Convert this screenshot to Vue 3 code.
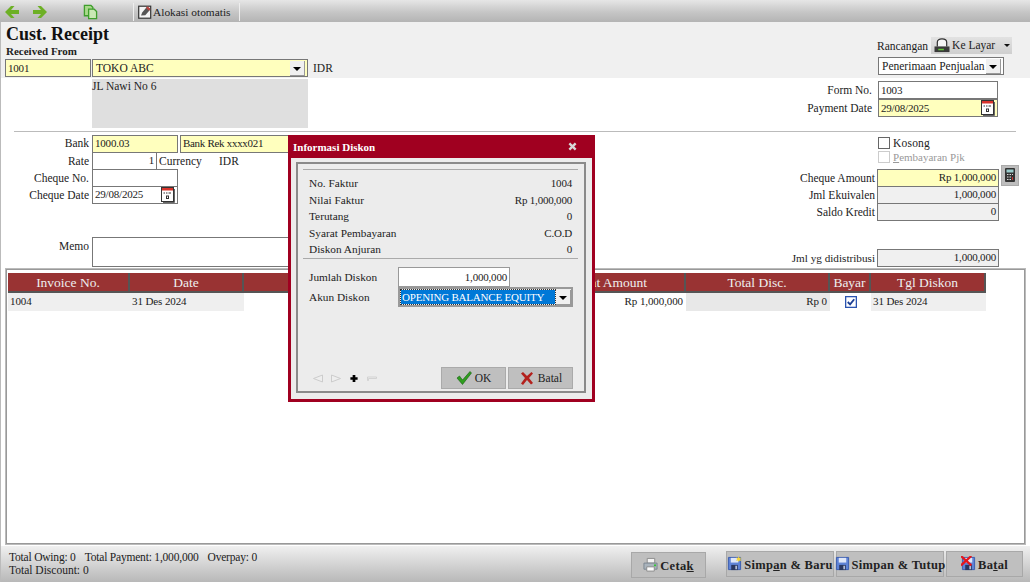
<script setup>
const infoRows = [
  ['No. Faktur', '1004'],
  ['Nilai Faktur', 'Rp 1,000,000'],
  ['Terutang', '0'],
  ['Syarat Pembayaran', 'C.O.D'],
  ['Diskon Anjuran', '0'],
]
const headers = ['Invoice No.', 'Date', '', 'Payment Amount', 'Total Disc.', 'Bayar', 'Tgl Diskon']
</script>

<template>
  <div class="app">
    <svg class="defs" width="0" height="0">
      <symbol id="cal" viewBox="0 0 16 16">
        <path d="M14.500 2v13.500H3" fill="none" stroke="#666" />
        <rect x="1.500" y=".5" width="12" height="14" fill="#fff" stroke="#333" />
        <rect x="2" y="1" width="11" height="2.500" fill="#d9342b" />
        <path d="M3.500 6h1.500M6 6h1.500M8.500 6H11" stroke="#333" />
        <path d="M6 8.500h3v3.500H6z" fill="#333" />
        <path d="M7 9.500h1v1.500H7z" fill="#fff" />
      </symbol>
      <symbol id="floppy" viewBox="0 0 16 16">
        <path d="M1.500 1.500h13v13h-13z" fill="#5f83d6" stroke="#3a5cae" />
        <path d="M4 2h8v5H4z" fill="#dfe7f8" />
        <path d="M4.500 9.500h7V15h-7z" fill="#2a3760" />
        <path d="M9 10.500h1.500V14H9z" fill="#cfd8ea" />
      </symbol>
    </svg>

    <div class="toolbar">
      <div class="tool-group">
        <svg class="t-arrow" viewBox="0 0 14 12"><path d="M0 6l6-6h3.500L6 4h8v4H6l3.500 4H6z" fill="#6db025" /></svg>
        <svg class="t-arrow t-next" viewBox="0 0 14 12"><path d="M14 6L8 0H4.500L8 4H0v4h8l-3.500 4H8z" fill="#6db025" /></svg>
        <svg class="t-copy" viewBox="0 0 16 16"><path d="M1.500 1h7l2 2v9h-9z" fill="#a9d98b" stroke="#3f9e2c" stroke-width="1.400" /><path d="M6 5h6l2.500 2.500V15H6z" fill="#c9e8b4" stroke="#3f9e2c" stroke-width="1.400" /></svg>
      </div>
      <div class="tool-sep"></div>
      <div class="tool-btn">
        <svg class="t-edit" viewBox="0 0 14 14"><rect x=".7" y="1.200" width="12" height="12" fill="#f4f4f4" stroke="#333" stroke-width="1.200" /><path d="M3 10.500l1.200-3 5-6 3.300 2.700-5.200 6z" fill="#555" /><path d="M9.500 1.300l3 2.700-1.500 1.800-3-2.700z" fill="#b8433f" /></svg>
        <span>Alokasi otomatis</span>
      </div>
      <div class="tool-sep"></div>
    </div>

    <header class="head">
      <div class="head-left">
        <h1>Cust. Receipt</h1>
        <div class="recv">Received From</div>
        <div class="recv-row">
          <div class="field yellow f-code num">1001</div>
          <div class="field yellow f-cust"><span>TOKO ABC</span><i class="drop"></i></div>
          <span class="idr">IDR</span>
        </div>
      </div>
      <div class="head-right">
        <div class="ranc">
          <span>Rancangan</span>
          <div class="layar">
            <svg class="printer" viewBox="0 0 18 16"><path d="M4 9V4.500C4 2 6 1 9 1s5 1 5 3.500V9" fill="#f5f5f5" stroke="#333" stroke-width="1.300" /><path d="M1 9h16v6H1z" fill="#3a3a3a" /><path d="M5 11.500h6v1.600H5z" fill="#62c83a" /></svg>
            <span>Ke Layar</span>
            <i class="caret"></i>
          </div>
        </div>
        <div class="field plain f-rsel"><span>Penerimaan Penjualan</span><i class="drop"></i></div>
      </div>
    </header>

    <main class="body">
      <section class="top">
        <div class="address">JL Nawi No 6</div>
        <div class="form-no">
          <label>Form No.</label>
          <div class="field plain num">1003</div>
          <label>Payment Date</label>
          <div class="field yellow date num"><span>29/08/2025</span><svg class="cal"><use href="#cal" /></svg></div>
        </div>
      </section>
      <hr class="divider" />

      <section class="mid">
        <div class="mid-left">
          <div class="row">
            <label class="first-label">Bank</label>
            <div class="field yellow w86 num">1000.03</div>
            <div class="field yellow bankname">Bank Rek xxxx021</div>
          </div>
          <div class="row">
            <label>Rate</label>
            <div class="field plain w64 right num">1</div>
            <span class="cur">Currency</span>
            <span class="cur-val">IDR</span>
          </div>
          <div class="row">
            <label>Cheque No.</label>
            <div class="field plain w86"></div>
          </div>
          <div class="row">
            <label>Cheque Date</label>
            <div class="field plain w86 date num"><span>29/08/2025</span><svg class="cal"><use href="#cal" /></svg></div>
          </div>
          <div class="row memo-row">
            <label>Memo</label>
            <div class="field plain memo"></div>
          </div>
        </div>

        <div class="mid-right">
          <div class="check-row"><i class="box"></i><span>Kosong</span></div>
          <div class="check-row off"><i class="box"></i><span><u>P</u>embayaran Pjk</span></div>
          <div class="amt-row amt-first">
            <label>Cheque Amount</label>
            <div class="field yellow amt num">Rp 1,000,000</div>
            <div class="calc">
              <svg viewBox="0 0 12 16"><rect x="1" y="1" width="10" height="14" rx="1" fill="#333" /><rect x="2.500" y="2.500" width="7" height="3" fill="#9cc" /><path d="M3 7.500h1.500M5.500 7.500H7M8 7.500h1M3 10h1.500M5.500 10H7M3 12.500h1.500M5.500 12.500H7" stroke="#ddd" /><path d="M8 10h1v3H8z" fill="#c33" /></svg>
            </div>
          </div>
          <div class="amt-row">
            <label>Jml Ekuivalen</label>
            <div class="field grey amt num">1,000,000</div>
          </div>
          <div class="amt-row">
            <label>Saldo Kredit</label>
            <div class="field grey amt num">0</div>
          </div>
          <div class="amt-row amt-last">
            <label>Jml yg didistribusi</label>
            <div class="field grey amt num">1,000,000</div>
          </div>
        </div>
      </section>

      <section class="grid-box">
        <div class="table">
          <div v-for="(h, i) in headers" :key="i" class="th">{{ h }}</div>
          <div class="td">1004</div>
          <div class="td">31 Des 2024</div>
          <div class="td white"></div>
          <div class="td white right">Rp 1,000,000</div>
          <div class="td alt right">Rp 0</div>
          <div class="td white center">
            <svg class="cb" viewBox="0 0 13 13"><rect x=".7" y=".7" width="11.600" height="11.600" fill="#fff" stroke="#2b54b0" stroke-width="1.400" /><path d="M3 6.500l2.500 2.500L10 3.500" fill="none" stroke="#1c3f94" stroke-width="2" /></svg>
          </div>
          <div class="td">31 Des 2024</div>
        </div>
      </section>
    </main>

    <footer class="foot">
      <div class="totals">
        <div class="t-line"><span>Total Owing: 0</span><span>Total Payment: 1,000,000</span><span>Overpay: 0</span></div>
        <div>Total Discount: 0</div>
      </div>
      <div class="actions">
        <button class="act cetak">
          <svg viewBox="0 0 16 16"><path d="M4.500 1.500h8v5h-8z" fill="#f4f4f4" stroke="#8a8a8a" /><path d="M1 6.500h14v6.500H1z" fill="#aab4bd" stroke="#7b8590" /><path d="M4 10.500h8V15H4z" fill="#fff" stroke="#8a8a8a" /><circle cx="12.800" cy="8.800" r="1.200" fill="#35c435" /></svg>
          <span>Ceta<u>k</u></span>
        </button>
        <button class="act baru">
          <svg viewBox="0 0 16 16"><use href="#floppy" /><path d="M12.500 0l.8 2 2.200-.4-1.400 1.700 1.400 1.700-2.200-.3-.8 1.800-.8-1.800-2.200.3 1.400-1.700-1.400-1.700 2.200.4z" fill="#f5d63d" /></svg>
          <span>Simp<u>a</u>n &amp; Baru</span>
        </button>
        <button class="act tutup">
          <svg viewBox="0 0 16 16"><use href="#floppy" /></svg>
          <span>Simpan &amp; Tutup</span>
        </button>
        <button class="act batal">
          <svg viewBox="0 0 16 16"><use href="#floppy" /><path d="M0 0l11 10M11 0L0 10" stroke="#e5161c" stroke-width="2.400" /></svg>
          <span>Ba<u>t</u>al</span>
        </button>
      </div>
    </footer>

    <div class="dialog">
      <div class="dlg-title">
        <span>Informasi Diskon</span>
        <svg class="dlg-x" viewBox="0 0 10 10"><path d="M1.500 1.500l7 7M8.500 1.500l-7 7" stroke="#d8d8d8" stroke-width="2.600" /></svg>
      </div>
      <div class="dlg-body">
        <div class="group">
          <div class="info">
            <div v-for="r in infoRows" :key="r[0]" class="info-row"><span>{{ r[0] }}</span><span class="num">{{ r[1] }}</span></div>
          </div>
          <div class="inputs">
            <label>Jumlah Diskon</label>
            <div class="field plain dlg-amt num">1,000,000</div>
            <label>Akun Diskon</label>
            <div class="dlg-sel"><span>OPENING BALANCE EQUITY</span><i class="drop"></i></div>
          </div>
          <div class="dlg-foot">
            <div class="nav">
              <svg viewBox="0 0 10 8"><path d="M9.500 .5v7L.5 4z" fill="#eee" stroke="#ccc" /></svg>
              <svg viewBox="0 0 10 8"><path d="M.5 .5v7l9-3.500z" fill="#eee" stroke="#ccc" /></svg>
              <svg viewBox="0 0 10 10"><path d="M3.500 1h3v2.500H9v3H6.500V9h-3V6.500H1v-3h2.500z" fill="#000" /></svg>
              <svg viewBox="0 0 10 8"><path d="M.5 2.500h9v1.500h-8v2h-1z" fill="#eee" stroke="#ccc" stroke-width=".8" /></svg>
            </div>
            <button class="dbtn">
              <svg viewBox="0 0 16 14"><path d="M1 7l2.500-2 3 4L14 .5 15.500 2 6.500 13.500z" fill="#2f9e1e" stroke="#145c10" stroke-width=".6" /></svg>
              <span>OK</span>
            </button>
            <button class="dbtn">
              <svg viewBox="0 0 14 14"><path d="M1 2.500L3 1l4 4 4.500-4L13 2.500 9 7l4 5-2 1.500L7 9l-4 5-2-1.500L5 7z" fill="#b3211d" /></svg>
              <span>Batal</span>
            </button>
          </div>
        </div>
      </div>
    </div>
  </div>
</template>

<style>
html, body { margin: 0; padding: 0; }
</style>

<style scoped>
.app {
  position: relative;
  width: 1030px;
  height: 582px;
  overflow: hidden;
  display: flex;
  flex-direction: column;
  font-family: "Liberation Serif", serif;
  font-size: 11.5px;
  color: #222;
  background: #fff;
}
.defs { position: absolute; }
label { white-space: nowrap; }
.num { font-size: 11px; letter-spacing: -.2px; }

.toolbar {
  height: 22px;
  flex: none;
  display: flex;
  align-items: center;
  background: linear-gradient(#e6e6e6, #c6c6c6 55%, #b4b4b4);
  box-sizing: border-box;
  padding-top: 2px;
}
.tool-group { display: flex; align-items: center; width: 130px; padding-left: 5px; box-sizing: border-box; }
.t-arrow { width: 14px; height: 12px; }
.t-next { margin-left: 14px; }
.t-copy { width: 15px; height: 16px; margin-left: 36px; }
.tool-sep { width: 1px; height: 18px; background: #eee; margin-left: 3px; }
.tool-btn { display: flex; align-items: center; gap: 1px; margin-left: 4px; width: 98px; font-size: 11.4px; }
.t-edit { width: 14px; height: 14px; }

.head {
  height: 56px;
  flex: none;
  box-sizing: border-box;
  background: #f0f0f0;
  display: flex;
  justify-content: space-between;
  border-left: 1px solid #bbb;
}
.head-left { padding-left: 4px; }
h1 { margin: 0; font-size: 18px; line-height: 23px; padding: 1px 0 0 1px; color: #111; }
.recv { font-weight: bold; font-size: 11px; line-height: 11px; padding-left: 1px; margin-top: 0; }
.recv-row { display: flex; align-items: center; margin-top: 2px; }
.field {
  box-sizing: border-box;
  border: 1px solid #777;
  height: 18px;
  line-height: 15px;
  padding: 0 2px;
  display: flex;
  align-items: center;
  white-space: nowrap;
  overflow: hidden;
}
.yellow { background: #ffffbe; }
.plain { background: #fff; }
.grey { background: #f0f0f0; }
.right { justify-content: flex-end; text-align: right; }
.f-code { width: 86px; }
.f-cust { width: 216px; margin-left: 1px; padding-left: 3px; justify-content: space-between; }
.idr { margin-left: 5px; }
.drop {
  flex: none;
  width: 14px;
  height: 14px;
  background: #f0f0f0;
  border-right: 1px solid #999;
  border-bottom: 1px solid #999;
  position: relative;
}
.drop::after {
  content: "";
  position: absolute;
  left: 3px;
  top: 6px;
  border: 4px solid transparent;
  border-top-color: #000;
}
.head-right { width: 152px; padding-top: 15px; box-sizing: border-box; }
.ranc { display: flex; align-items: center; height: 18px; gap: 3px; margin-left: -1px; }
.layar {
  width: 81px;
  height: 17px;
  flex: none;
  margin-top: -2px;
  display: flex;
  align-items: center;
  background: linear-gradient(#e2e2e2, #cfcfcf);
  padding-left: 2px;
  box-sizing: border-box;
  gap: 1px;
  white-space: nowrap;
}
.printer { width: 18px; height: 15px; flex: none; }
.caret { border: 3.500px solid transparent; border-top-color: #111; margin: 4px 0 0 8px; }
.f-rsel { width: 126px; margin-top: 2px; padding-left: 3px; justify-content: space-between; }

.body {
  flex: 1;
  min-height: 0;
  border-left: 1px solid #bbb;
  box-sizing: border-box;
  display: flex;
  flex-direction: column;
  background: #fff;
}
.top { height: 53px; flex: none; display: flex; justify-content: space-between; padding-left: 91px; padding-top: 1px; box-sizing: border-box; }
.address { width: 216px; height: 49px; background: #dfdfdf; line-height: 15px; }
.form-no {
  display: grid;
  grid-template-columns: 100px 120px;
  column-gap: 6px;
  align-items: center;
  justify-items: end;
  padding: 2px 32px 0 0;
  align-self: flex-start;
}
.form-no .field { width: 120px; justify-self: start; }
.date { justify-content: space-between; padding-right: 1px; }
.cal { width: 16px; height: 16px; flex: none; }
.divider { flex: none; width: 1002px; margin: 0 0 0 13px; border: 0; height: 1px; background: #bbb; }

.mid { height: 136px; flex: none; display: flex; justify-content: space-between; box-sizing: border-box; padding-top: 3px; }
.mid-left { width: 500px; }
.row { display: flex; align-items: center; height: 17px; }
.row label { width: 88px; text-align: right; margin-right: 3px; flex: none; }
.row .first-label { margin-top: -1px; }
.row .field { height: 18px; }
.w86 { width: 86px; }
.w64 { width: 65px; }
.bankname { width: 200px; margin-left: 2px; font-size: 11px; letter-spacing: -.3px; }
.cur { margin-left: 2px; width: 60px; }
.memo-row { height: 30px; margin-top: 34px; align-items: flex-start; }
.memo-row label { line-height: 15px; padding-top: 2px; }
.memo { width: 360px; height: 30px !important; }

.mid-right { width: 230px; padding-top: 1px; box-sizing: border-box; }
.check-row { display: flex; align-items: center; height: 14px; margin-left: 78px; gap: 3px; letter-spacing: .2px; }
.check-row .box { width: 10px; height: 10px; border: 1px solid #666; background: #fff; display: block; }
.off { color: #999; font-size: 11px; letter-spacing: 0; }
.off .box { border-color: #ccc; }
.amt-row { display: flex; align-items: center; height: 17px; }
.amt-row label { width: 75px; margin-right: 2px; text-align: right; flex: none; }
.amt-row .field { height: 18px; }
.amt { width: 122px; justify-content: flex-end; }
.amt-first { margin-top: 5px; }
.amt-last { margin-top: 29px; }
.amt-last label { margin-left: -20px; width: 95px; font-size: 11.2px; }
.calc {
  width: 18px;
  height: 21px;
  margin: -5px 0 0 2px;
  background: #bdbdbd;
  border: 1px solid #aaa;
  box-sizing: border-box;
  display: flex;
  align-items: center;
  justify-content: center;
}
.calc svg { width: 12px; height: 16px; }

.grid-box {
  flex: 1;
  min-height: 0;
  margin: 0 4px 1px 4px;
  border: 2px solid #bbb;
  outline: 1px solid #999;
  outline-offset: -2px;
  box-sizing: border-box;
  padding: 3px 0 0 1px;
  background: #fff;
}
.table {
  display: grid;
  grid-template-columns: 122px 114px 272px 170px 144px 41px 115px;
  grid-auto-rows: min-content;
  font-size: 11px;
  letter-spacing: -.1px;
}
.th {
  height: 20px;
  box-sizing: border-box;
  background: #993333;
  color: #eee;
  font-size: 13.5px;
  letter-spacing: 0;
  line-height: 19px;
  text-align: center;
  border-right: 2px solid #555;
  border-bottom: 2px solid #555;
  white-space: nowrap;
}
.td {
  height: 18px;
  box-sizing: border-box;
  line-height: 16px;
  background: #efefef;
  padding: 0 2px;
  white-space: nowrap;
}
.td.white { background: #fff; }
.td.alt { background: #e8e8e8; }
.td.right { text-align: right; padding-right: 3px; }
.td.center { display: flex; align-items: center; justify-content: center; }
.cb { width: 12px; height: 12px; }

.foot {
  height: 36px;
  flex: none;
  display: flex;
  justify-content: space-between;
  background: linear-gradient(#f0f0f0, #b8b8b8);
  border-left: 1px solid #bbb;
  box-sizing: border-box;
  padding-left: 8px;
}
.totals { padding-top: 5px; line-height: 13px; }
.t-line { display: flex; gap: 9px; letter-spacing: -.2px; }
.actions { display: flex; align-items: flex-start; padding: 5px 7px 0 0; }
.act {
  height: 26px;
  padding: 2px 0 0;
  margin: 0 0 0 2px;
  display: flex;
  align-items: center;
  justify-content: center;
  gap: 2px;
  font-family: inherit;
  font-size: 12.5px;
  font-weight: bold;
  letter-spacing: .3px;
  color: #222;
  background: #bfbfbf;
  border: 1px solid #a8a8a8;
  box-sizing: border-box;
  white-space: nowrap;
}
.act svg { width: 15px; height: 15px; flex: none; margin-top: -3px; }
.cetak { width: 75px; margin-right: 18px; margin-top: 1px; }
.baru { width: 108px; }
.tutup { width: 108px; }
.batal { width: 77px; }

.dialog {
  position: absolute;
  left: 288px;
  top: 135px;
  width: 307px;
  height: 267px;
  box-sizing: border-box;
  border: 3px solid #a00020;
  border-top: 0;
  background: #ececec;
  display: flex;
  flex-direction: column;
  font-size: 11.3px;
}
.dlg-title {
  height: 23px;
  flex: none;
  margin: 0 -1px;
  background: #a00020;
  display: flex;
  align-items: center;
  justify-content: space-between;
  color: #fff;
  font-weight: bold;
  font-size: 11px;
  padding: 1px 16px 0 3px;
  box-sizing: border-box;
}
.dlg-x { width: 9px; height: 9px; margin-top: -2px; }
.dlg-body { flex: 1; padding: 4px 6px 6px 5px; display: flex; min-height: 0; }
.group {
  flex: 1;
  border: 2px solid #8a8a8a;
  box-sizing: border-box;
  padding: 5px 6px 0 5px;
  display: flex;
  flex-direction: column;
}
.info {
  border-top: 1px solid #aaa;
  border-bottom: 1px solid #aaa;
  padding: 5px 6px 1px;
  height: 90px;
  box-sizing: border-box;
  flex: none;
}
.info-row { display: flex; justify-content: space-between; height: 16.500px; line-height: 16.500px; }
.inputs {
  display: grid;
  grid-template-columns: 89px auto;
  grid-auto-rows: 20px;
  align-items: center;
  justify-items: start;
  padding: 8px 0 0 6px;
}
.dlg-amt { width: 112px; height: 20px; justify-content: flex-end; padding-right: 2px; border-color: #999; }
.dlg-sel {
  width: 175px;
  height: 20px;
  box-sizing: border-box;
  border: 2px solid #999;
  background: #eee;
  display: flex;
  align-items: center;
  justify-content: space-between;
}
.dlg-sel span {
  flex: 1;
  height: 14px;
  line-height: 14px;
  background: #0078d7;
  color: #fff;
  outline: 1px dotted #333;
  padding: 0 1px;
  margin-left: 1px;
  margin-right: 1px;
  white-space: nowrap;
  overflow: hidden;
  font-size: 11px;
  letter-spacing: -.2px;
}
.dlg-foot { margin-top: auto; display: flex; align-items: center; padding: 0 5px 2px 10px; }
.nav { display: flex; align-items: center; gap: 8px; margin-right: auto; }
.nav svg { width: 10px; height: 9px; }
.dbtn {
  width: 65px;
  height: 22px;
  margin-left: 2px;
  padding: 0;
  display: flex;
  align-items: center;
  justify-content: center;
  gap: 3px;
  background: #bfbfbf;
  border: 1px solid #aaa;
  font-family: inherit;
  font-size: 11.5px;
  color: #222;
}
.dbtn svg { width: 16px; height: 14px; }
</style>
